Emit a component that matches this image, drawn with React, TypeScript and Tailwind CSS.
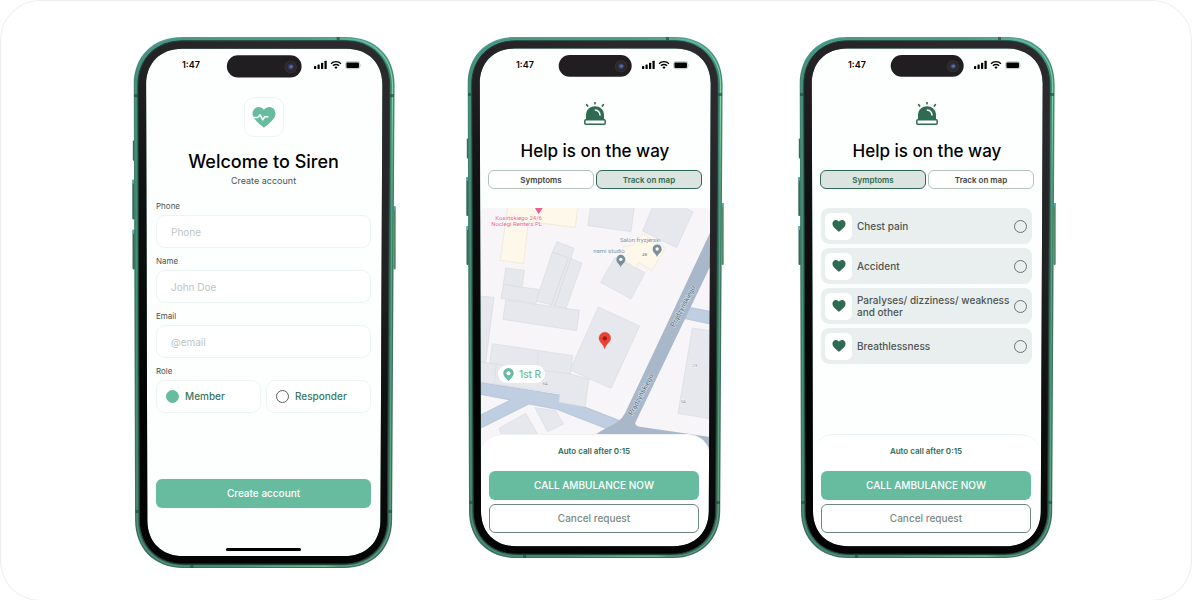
import type { ReactNode } from 'react';

const HEART =
  'M34.500 61 C30 59 14 45 6 35 C-5 20 2 1 18 0 C26 0 32 4 34.500 9 C37 4 43 0 51 0 C67 1 74 20 63 35 C55 45 39 59 34.500 61 Z';

/* Rounded outline of the phone: the sides lean slightly inwards towards the bottom. */
function outline(lt: number, rt: number, lb: number, rb: number, t: number, b: number, r: number) {
  const k = r * 0.4;
  return [
    `M${lt + r} ${t}`,
    `L${rt - r} ${t}`,
    `C${rt - k} ${t} ${rt} ${t + k} ${rt} ${t + r}`,
    `L${rb} ${b - r}`,
    `C${rb} ${b - k} ${rb - k} ${b} ${rb - r} ${b}`,
    `L${lb + r} ${b}`,
    `C${lb + k} ${b} ${lb} ${b - k} ${lb} ${b - r}`,
    `L${lt} ${t + r}`,
    `C${lt} ${t + k} ${lt + k} ${t} ${lt + r} ${t}`,
    'Z',
  ].join(' ');
}

const OUTER = outline(467.7, 722.6, 469, 720.2, 37, 558, 47);
const RIM = outline(469.7, 720.6, 471, 718.2, 38.8, 556.2, 46);
const BEZEL = outline(471.8, 717.8, 473.2, 715.7, 40.8, 554.2, 44);
const SCREEN = outline(479.8, 710.7, 481, 708.8, 48.6, 546.3, 35);

function PhoneFrame({ id }: { id: string }) {
  return (
    <svg
      aria-hidden="true"
      viewBox="466 37 258 521"
      preserveAspectRatio="none"
      className="pointer-events-none absolute inset-0 z-20 h-full w-full overflow-visible"
    >
      <defs>
        <linearGradient id={`${id}-metal`} x1="0" y1="0" x2="0" y2="1">
          <stop offset="0" stopColor="#4f9f97" />
          <stop offset="0.07" stopColor="#3f8a75" />
          <stop offset="0.5" stopColor="#3a7561" />
          <stop offset="1" stopColor="#3d6e62" />
        </linearGradient>
        <linearGradient id={`${id}-rim`} x1="0" y1="0" x2="1" y2="0.3">
          <stop offset="0" stopColor="#4c9079" />
          <stop offset="0.6" stopColor="#4a9a80" />
          <stop offset="0.95" stopColor="#7fd3a2" />
          <stop offset="1" stopColor="#5ba37f" />
        </linearGradient>
        <linearGradient id={`${id}-glass`} x1="0.6" y1="0" x2="0.2" y2="1">
          <stop offset="0" stopColor="#2b292c" />
          <stop offset="0.25" stopColor="#232124" />
          <stop offset="0.45" stopColor="#111012" />
          <stop offset="0.8" stopColor="#030303" />
          <stop offset="1" stopColor="#050404" />
        </linearGradient>
        <radialGradient id={`${id}-lens`}>
          <stop offset="0" stopColor="#5c78ad" />
          <stop offset="0.4" stopColor="#2b3554" />
          <stop offset="0.7" stopColor="#2b2322" />
          <stop offset="1" stopColor="#3c3435" />
        </radialGradient>
      </defs>
      <g fill="#35695a">
        <rect x="466.800" y="138.500" width="2" height="20" rx="0.800" />
        <rect x="466.300" y="177" width="2.500" height="39" rx="1" />
        <rect x="466.500" y="226" width="2.500" height="39" rx="1" />
        <rect x="721.500" y="203" width="2.200" height="62" rx="1" fill="#4d8a6a" />
      </g>
      <g fill="#4fb5c6">
        <rect x="466.300" y="177" width="1.500" height="4" />
        <rect x="466.500" y="226" width="1.500" height="4" />
        <rect x="722.300" y="203" width="1.500" height="4" />
      </g>
      <path d={`${OUTER} ${SCREEN}`} fillRule="evenodd" fill={`url(#${id}-metal)`} />
      <path d={RIM} fill="none" stroke={`url(#${id}-rim)`} strokeWidth="1.200" />
      <path d={`${BEZEL} ${SCREEN}`} fillRule="evenodd" fill={`url(#${id}-glass)`} />
      <path d={BEZEL} fill="none" stroke="#1f4237" strokeWidth="1" />
      <g fill="#264c40" opacity="0.7">
        <rect x="468" y="93" width="4" height="3" />
        <rect x="718" y="93" width="4" height="3" />
        <rect x="469.500" y="501" width="4" height="3" />
        <rect x="716" y="501" width="4" height="3" />
        <rect x="666" y="37" width="3" height="3" />
        <rect x="523" y="555" width="3" height="3" />
      </g>
      <rect x="558.700" y="55" width="73" height="21.700" rx="10.850" fill="#211e21" />
      <circle cx="621" cy="66.300" r="6" fill={`url(#${id}-lens)`} />
      <circle cx="621.800" cy="66" r="1.500" fill="#4f6ea8" />
    </svg>
  );
}

function StatusBar() {
  return (
    <div className="flex h-[31px] items-center justify-between pr-5 pl-9 text-[9px] font-semibold text-black">
      <span>1:47</span>
      <svg aria-hidden="true" width="48" height="10" viewBox="0 0 48 10">
        <rect x="0" y="6" width="2.200" height="3" rx="0.600" />
        <rect x="3.500" y="4.500" width="2.200" height="4.500" rx="0.600" />
        <rect x="7" y="2.700" width="2.200" height="6.300" rx="0.600" />
        <rect x="10.500" y="0.700" width="2.200" height="8.300" rx="0.600" />
        <g fill="none" stroke="#000" strokeWidth="1.300">
          <path d="M17 3.700 C19.700 0.900 24.300 0.900 27 3.700" />
          <path d="M18.900 5.700 C20.500 4.100 23.500 4.100 25.100 5.700" />
        </g>
        <path d="M20.400 7.200 Q22 6 23.600 7.200 L22 9 Z" />
        <rect x="31.700" y="1.700" width="14" height="7" rx="2" fill="none" stroke="#a8a8a8" strokeWidth="0.700" />
        <rect x="32.400" y="2.400" width="12.600" height="5.600" rx="1.200" />
        <path d="M46.500 4 v2.400 q1.200 -1.200 0 -2.400" fill="#a8a8a8" />
      </svg>
    </div>
  );
}

function Phone({ id, large, children }: { id: string; large?: boolean; children: ReactNode }) {
  const size = large ? 'w-[264px] min-h-[531px] -mr-1' : 'w-[258px] min-h-[521px]';
  return (
    <section className={`relative flex shrink-0 px-[14px] py-3 ${size}`}>
      <div className="flex min-w-0 flex-1 flex-col rounded-[32px] bg-[#fdfffe]">
        <StatusBar />
        {children}
      </div>
      <PhoneFrame id={id} />
    </section>
  );
}

function Field({ id, label, placeholder, type }: { id: string; label: string; placeholder: string; type: string }) {
  return (
    <div className="flex flex-col">
      <label htmlFor={id} className="pb-[2px] text-[8px] leading-[13px] text-[#4b5350]">
        {label}
      </label>
      <input
        id={id}
        type={type}
        placeholder={placeholder}
        className="h-[33px] w-full rounded-[9px] border border-[#edf5f3] bg-white px-[14px] text-[10px] text-[#2f6b52] outline-none placeholder:text-[#bcc6c3]"
      />
    </div>
  );
}

function Role({ label, checked }: { label: string; checked?: boolean }) {
  return (
    <label className="flex h-[33px] flex-1 items-center gap-[6px] rounded-[9px] border border-[#edf5f3] bg-white pl-[9px] text-[10px] font-medium text-[#3a755d]">
      <input
        type="radio"
        name="role"
        defaultChecked={checked}
        className="size-[13px] appearance-none rounded-full border border-[#59625f] checked:border-[#67bb9e] checked:bg-[#67bb9e]"
      />
      {label}
    </label>
  );
}

function SignUp() {
  return (
    <Phone id="signup" large>
      <form className="flex flex-1 flex-col pr-[11px] pl-[10px]">
        <div className="mt-[17px] flex size-10 items-center justify-center self-center rounded-[10px] border border-[#edf5f3] bg-white">
          <svg aria-hidden="true" width="24" height="21" viewBox="-1 0 71 62">
            <path d={HEART} fill="#67bb9e" />
            <path
              d="M-1 31 H16 L23 23 L31 38 L36 29 H46"
              fill="none"
              stroke="#fff"
              strokeWidth="4.500"
              strokeLinejoin="round"
              strokeLinecap="round"
            />
          </svg>
        </div>
        <h1 className="mt-3 text-center text-[18px] leading-[26px] font-medium text-black">Welcome to Siren</h1>
        <p className="text-center text-[9px] leading-3 text-[#4b5350]">Create account</p>
        <div className="mt-[13px] flex flex-col gap-[7px]">
          <Field id="phone" label="Phone" placeholder="Phone" type="tel" />
          <Field id="name" label="Name" placeholder="John Doe" type="text" />
          <Field id="email" label="Email" placeholder="@email" type="email" />
          <fieldset>
            <legend className="pb-[2px] text-[8px] leading-[13px] text-[#4b5350]">Role</legend>
            <div className="flex gap-[5px]">
              <Role label="Member" checked />
              <Role label="Responder" />
            </div>
          </fieldset>
        </div>
        <button type="button" className="mt-auto h-[29px] rounded-[6px] bg-[#67bb9e] text-[10px] font-medium text-white">
          Create account
        </button>
        <div className="mt-10 mb-[5px] h-[3px] w-[75px] self-center rounded-full bg-black" />
      </form>
    </Phone>
  );
}

function SirenIcon() {
  return (
    <svg aria-hidden="true" width="22" height="24" viewBox="0 0 66 72" className="self-center">
      <path d="M6 52 V40 C6 4 60 4 60 40 V52 Z" fill="#2f6b52" />
      <rect x="2.500" y="53" width="61" height="14" rx="3" fill="#fff" stroke="#2f6b52" strokeWidth="4.500" />
      <path d="M34 24 C43 25 47 31 48 39" fill="none" stroke="#fff" strokeWidth="4.500" strokeLinecap="round" />
      <path
        d="M33 2 V5 M8 8 L11 12 M58 8 L55 12"
        fill="none"
        stroke="#2f6b52"
        strokeWidth="5"
        strokeLinecap="round"
      />
    </svg>
  );
}

function Tab({ label, active }: { label: string; active: boolean }) {
  const look = active
    ? 'border-[#2f6b52] bg-[#dbe4e1] text-[#2f6b52]'
    : 'border-[#b5c3be] bg-white text-[#3c4341]';
  return (
    <button
      type="button"
      role="tab"
      aria-selected={active}
      className={`h-[19px] flex-1 rounded-[6px] border text-[8px] leading-none font-semibold ${look}`}
    >
      {label}
    </button>
  );
}

function Emergency({ id, tab, children }: { id: string; tab: 'symptoms' | 'map'; children: ReactNode }) {
  return (
    <Phone id={id}>
      <div className="flex flex-col pt-[22px]">
        <SirenIcon />
        <h2 className="mt-3 text-center text-[17px] leading-[26px] font-medium text-black">Help is on the way</h2>
        <div role="tablist" className="mt-[6px] flex gap-[2px] px-2">
          <Tab label="Symptoms" active={tab === 'symptoms'} />
          <Tab label="Track on map" active={tab === 'map'} />
        </div>
      </div>
      {children}
      <div className="relative z-10 flex flex-col rounded-t-[22px] border-t border-[#edf1f0] bg-white pt-[10px] pr-[11px] pb-[13px] pl-[9px]">
        <p className="text-center text-[8px] leading-[13px] font-semibold text-[#2f6b52]">Auto call after 0:15</p>
        <button type="button" className="mt-[13px] h-[29px] rounded-[6px] bg-[#67bb9e] text-[10px] font-medium text-white">
          CALL AMBULANCE NOW
        </button>
        <button
          type="button"
          className="mt-1 h-[29px] rounded-[6px] border border-[#6f8880] bg-white text-[10px] font-medium text-[#7a8a85]"
        >
          Cancel request
        </button>
      </div>
    </Phone>
  );
}

function StreetMap() {
  return (
    <svg
      role="img"
      aria-label="Street map"
      viewBox="45 24 690 732"
      preserveAspectRatio="xMidYMin slice"
      className="absolute inset-0 h-full w-full"
    >
      <rect x="45" y="24" width="690" height="732" fill="#f7f5f7" />
      <g fill="#bfcee0" stroke="#a9bdd4" strokeWidth="2">
        <path d="M40 546 L285 585 Q300 600 370 625 L470 664 L440 692 L275 628 L192 612 L40 688 V648 L136 600 L40 582 Z" />
        <path d="M668 321 L740 335 V373 L650 354 Z" />
      </g>
      <path
        d="M740 88 L480 640 Q466 668 420 686 L388 705 L388 756 H740 V712 L535 682 Q505 678 512 666 L740 190 Z"
        fill="#a8b8ca"
      />
      <g fill="#e6e8ed" stroke="#d9dbe3" strokeWidth="2">
        <path d="M376 22 H508 L498 95 L369 77 Z" />
        <path d="M562 22 H655 L684 35 L635 143 L533 93 Z" />
        <path d="M450 172 L540 218 L498 297 L407 247 Z" />
        <path d="M400 321 L524 378 L438 565 L315 510 Z" />
        <path d="M276 125 L327 145 L318 175 L351 190 L303 325 L213 303 L262 157 Z" />
        <path d="M262 157 L310 173 L258 318 M318 175 L268 320" fill="none" stroke="#d3d4e2" />
        <path d="M122 204 L178 211 L172 262 L221 268 L213 310 L108 295 L115 253 Z" />
        <path d="M115 253 L172 262" />
        <path d="M122 300 L343 331 L335 392 L114 358 Z" />
        <path d="M40 288 L87 292 L62 487 L40 484 Z" />
        <path d="M82 431 L323 467 L316 522 L372 537 L360 620 L282 607 L284 580 L88 552 L40 545 V484 L74 490 Z" />
        <path d="M220 452 L216 508 M94 492 L88 552 M74 490 L316 522" fill="none" />
        <path d="M682 384 L740 393 V657 L639 640 Z" />
        <path d="M102 685 L182 640 L220 706 L110 706 Z" />
        <path d="M210 623 L272 632 L296 672 L248 695 Z" />
      </g>
      <g fill="#fdf8ea" stroke="#efe6c8" strokeWidth="2">
        <path d="M128 22 H338 L331 82 L190 65 L176 191 L106 181 Z" />
        <path d="M533 101 L602 145 L560 211 L520 187 L511 203 L467 172 L476 140 L505 135 Z" />
      </g>
      <g fill="#78909c">
        <path d="M467 203 C465 192 454 190 454 178 A13.500 13.500 0 0 1 481 178 C481 190 469 192 467 203 Z" />
        <path d="M576 172 C574 161 563 159 563 147 A13.500 13.500 0 0 1 590 147 C590 159 578 161 576 172 Z" />
      </g>
      <circle cx="467.500" cy="178" r="5" fill="#fff" />
      <circle cx="576.500" cy="147" r="5" fill="#fff" />
      <path d="M210 24 H233 L221 43 Z" fill="#ec5f92" />
      <path
        d="M419 447 C416 432 402 427 402 414 A17.500 17.500 0 0 1 437 414 C437 427 422 432 419 447 Z"
        fill="#ea4335"
        stroke="#c5352a"
        strokeWidth="1"
      />
      <circle cx="419.500" cy="415" r="6.500" fill="#a11a14" />
      <g fontFamily="Roboto, sans-serif" fontSize="18" stroke="#fff" strokeWidth="2" paintOrder="stroke">
        <text x="231" y="60" textAnchor="end" fill="#ec5f92">
          Kosińskiego 24/6
        </text>
        <text x="231" y="78" textAnchor="end" fill="#ec5f92">
          Noclegi Renters PL
        </text>
        <g fill="#78909c">
          <text x="526" y="127" textAnchor="middle">
            Salon fryzjerski
          </text>
          <text x="432" y="160" textAnchor="middle">
            nami studio
          </text>
        </g>
        <g fill="#7d828b" fontSize="13" textAnchor="middle">
          <text x="539" y="168">4B</text>
          <text x="241" y="555">6A</text>
          <text x="689" y="500">23</text>
          <text x="655" y="610">5A</text>
        </g>
        <g fill="#566473" fontSize="21" stroke="#dde4ec" strokeWidth="3" textAnchor="middle">
          <text transform="translate(660 322) rotate(-62)">Prądzyńskiego</text>
          <text transform="translate(534 587) rotate(-62)">Prądzyńskiego</text>
        </g>
      </g>
    </svg>
  );
}

function TrackOnMap() {
  return (
    <Emergency id="track" tab="map">
      <div className="relative mt-[19px] -mb-[18px] min-h-[244px] flex-1 overflow-hidden rounded-t-[4px]">
        <StreetMap />
        <div className="absolute top-[157px] left-[18px] flex h-[18px] items-center gap-[5px] rounded-full bg-white pr-1 pl-[5px] text-[10px] font-medium text-[#67bb9e]">
          <svg aria-hidden="true" width="11" height="13" viewBox="0 0 11 13">
            <path d="M5.500 13 C4 11 0.300 8.500 0.300 5.200 A5.200 5.200 0 0 1 10.700 5.200 C10.700 8.500 7 11 5.500 13 Z" fill="#67bb9e" />
            <circle cx="5.500" cy="5.200" r="2" fill="#fff" />
          </svg>
          1st R
        </div>
      </div>
    </Emergency>
  );
}

const SYMPTOMS = ['Chest pain', 'Accident', 'Paralyses/ dizziness/ weakness and other', 'Breathlessness'];

function Symptoms() {
  return (
    <Emergency id="symptoms" tab="symptoms">
      <ul className="mt-[19px] flex flex-1 flex-col gap-1 pr-[10px] pl-[9px]">
        {SYMPTOMS.map((name) => (
          <li key={name}>
            <label className="flex h-9 items-center rounded-[8px] bg-[#e9efee] pr-[5px] pl-1 text-[10px] leading-3 font-medium text-[#4e5452]">
              <span className="mr-[5px] flex size-[27px] shrink-0 items-center justify-center rounded-[6px] bg-white">
                <svg aria-hidden="true" width="14" height="12" viewBox="-1 0 71 62">
                  <path d={HEART} fill="#2f6b52" />
                </svg>
              </span>
              <span className="min-w-0 flex-1">{name}</span>
              <input type="checkbox" className="size-[13px] shrink-0 appearance-none rounded-full border border-[#6b7371]" />
            </label>
          </li>
        ))}
      </ul>
    </Emergency>
  );
}

export default function App() {
  return (
    <main className="flex min-h-screen flex-wrap items-start justify-center gap-x-[74px] gap-y-10 rounded-[40px] border border-[#eeeeee] bg-white pt-9 pr-1 pb-8 font-['Inter',sans-serif]">
      <SignUp />
      <TrackOnMap />
      <Symptoms />
    </main>
  );
}
